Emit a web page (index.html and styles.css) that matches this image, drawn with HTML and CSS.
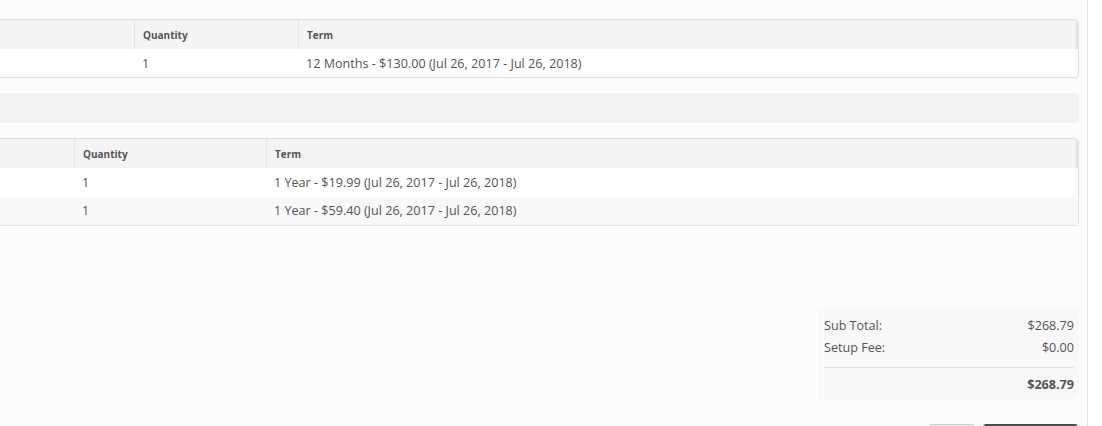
FILE: index.html
```html
<!DOCTYPE html>
<html lang="en">

<head>
    <meta charset="UTF-8">
    <meta name="viewport" content="width=device-width, initial-scale=1.0">
    <title>Order Summary</title>
    <link rel="stylesheet" href="styles.css">
</head>

<body>
    <div class="page">
        <div class="main">

            <table class="items first">
                <thead>
                    <tr>
                        <th class="col-name"></th>
                        <th class="col-qty">Quantity</th>
                        <th>Term</th>
                    </tr>
                </thead>
                <tbody>
                    <tr>
                        <td></td>
                        <td>1</td>
                        <td>12 Months - $130.00 (Jul 26, 2017 - Jul 26, 2018)</td>
                    </tr>
                </tbody>
            </table>

            <div class="section-bar"></div>

            <table class="items second">
                <thead>
                    <tr>
                        <th class="col-name"></th>
                        <th class="col-qty">Quantity</th>
                        <th>Term</th>
                    </tr>
                </thead>
                <tbody>
                    <tr>
                        <td></td>
                        <td>1</td>
                        <td>1 Year - $19.99 (Jul 26, 2017 - Jul 26, 2018)</td>
                    </tr>
                    <tr>
                        <td></td>
                        <td>1</td>
                        <td>1 Year - $59.40 (Jul 26, 2017 - Jul 26, 2018)</td>
                    </tr>
                </tbody>
            </table>

            <div class="totals">
                <div class="total-row">
                    <span>Sub Total:</span>
                    <span>$268.79</span>
                </div>
                <div class="total-row">
                    <span>Setup Fee:</span>
                    <span>$0.00</span>
                </div>
                <div class="total-row grand">
                    <span></span>
                    <span>$268.79</span>
                </div>
            </div>

            <div class="actions">
                <button class="btn btn-light"></button>
                <button class="btn btn-dark"></button>
            </div>

        </div>
    </div>
</body>

</html>
```

FILE: styles.css
```css
*{
    margin: 0;
    box-sizing: border-box;
}
body{
    background: #fcfcfc;
    font-family: "Open Sans", "Liberation Sans", sans-serif;
    color: #555;
    overflow: hidden;
}
.page{
    display: flex;
    width: 1102px;
    height: 426px;
    background: #fff;
}
.main{
    flex-shrink: 0;
    width: 1388px;
    margin-left: -300px;
    padding: 19px 8px 0 300px;
    background: #fcfcfc;
    border-right: 1px solid #e2e2e2;
}
.items{
    width: calc(100% + 300px);
    margin-left: -300px;
    border-collapse: separate;
    border-spacing: 0;
    border: 1px solid #e0e0e0;
    border-radius: 4px;
    background: #fff;
    font-size: 12.6px;
}
.items th{
    height: 29px;
    padding: 0 8px;
    text-align: left;
    font-size: 10px;
    font-weight: 700;
    background: #f4f4f4;
    border-left: 1px solid #e4e4e4;
}
.items th:first-child{
    border-left: none;
    border-top-left-radius: 4px;
}
.items th:last-child{
    border-top-right-radius: 4px;
    border-right: 2px solid #e4e4e4;
}
.items td{
    height: 28px;
    padding: 0 8px;
}
.items tbody tr:nth-child(even) td{
    background: #f8f8f8;
}
.first .col-name{
    width: 433px;
}
.first .col-qty{
    width: 164px;
}
.second .col-name{
    width: 373px;
}
.second .col-qty{
    width: 192px;
}
.second td{
    height: 28.5px;
}
.section-bar{
    height: 30px;
    margin: 15px 0 15px -300px;
    background: #f3f3f3;
    border-radius: 4px;
}
.totals{
    width: 261px;
    margin: 83px 0 0 auto;
    padding: 6px 5px 3px 6px;
    background: #f8f8f8;
    border-radius: 4px;
    font-size: 12.6px;
}
.total-row{
    display: flex;
    justify-content: space-between;
    line-height: 22px;
}
.total-row.grand{
    margin-top: 8px;
    padding-top: 6px;
    border-top: 1px solid #e2e2e2;
    font-weight: 700;
}
.actions{
    display: flex;
    justify-content: flex-end;
    gap: 8px;
    margin-top: 25px;
    padding-right: 1px;
}
.btn{
    height: 34px;
    border-radius: 3px;
}
.btn-light{
    width: 46px;
    background: #f0f0f0;
    border: 1px solid #ccc;
}
.btn-dark{
    width: 95px;
    background: #555;
    border: 1px solid #444;
}
```
